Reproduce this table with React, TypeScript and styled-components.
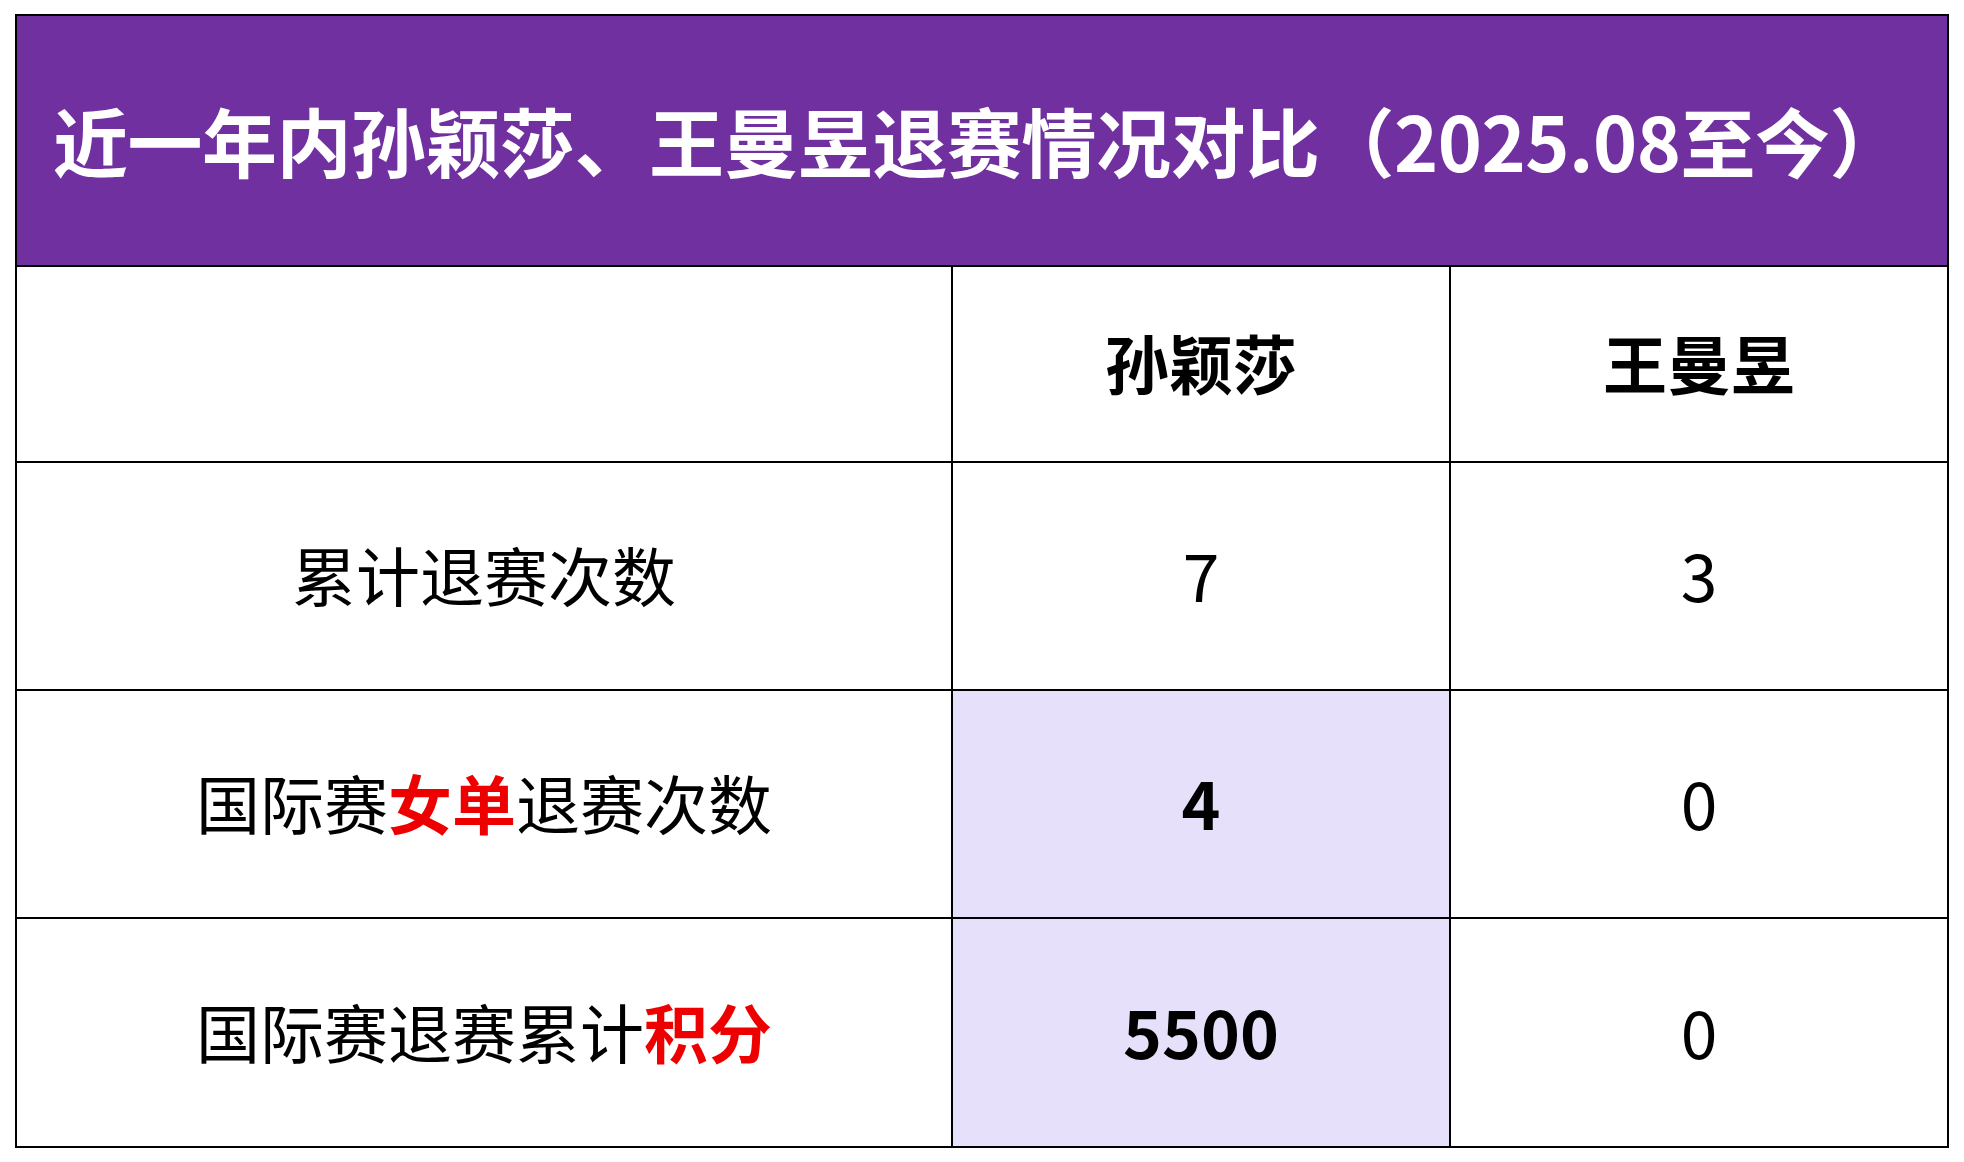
import React from "react";
import styled, { createGlobalStyle } from "styled-components";

const Global = createGlobalStyle`
  html, body {
    margin: 0;
    padding: 0;
    background: #ffffff;
  }
  body {
    font-family: "Noto Sans CJK SC", "Noto Sans", sans-serif;
  }
`;

const Page = styled.div`
  padding: 14px 0 0 15px;
`;

const Table = styled.div`
  width: 1934px;
  box-sizing: border-box;
  border: 2px solid #000;
  display: flex;
  flex-direction: column;
`;

const TitleBar = styled.div`
  height: 251px;
  box-sizing: border-box;
  background: #7030a0;
  border-bottom: 2px solid #000;
  display: flex;
  align-items: center;
  padding: 0 0 2px 36px;
`;

const Title = styled.h1`
  margin: 0;
  color: #ffffff;
  font-family: "Noto Sans CJK SC", sans-serif;
  font-weight: 700;
  font-size: 75px;
  line-height: 1;
  letter-spacing: -0.5px;
`;

const Grid = styled.div`
  display: grid;
  grid-template-columns: 936px 498px 1fr;
  grid-template-rows: 196px 228px 228px 227px;
`;

const Cell = styled.div<{ $last?: boolean; $bottom?: boolean; $tint?: boolean }>`
  box-sizing: border-box;
  display: flex;
  align-items: center;
  justify-content: center;
  border-right: ${(p) => (p.$last ? "none" : "2px solid #000")};
  border-bottom: ${(p) => (p.$bottom ? "none" : "2px solid #000")};
  background: ${(p) => (p.$tint ? "#e6e0fa" : "#ffffff")};
  color: #000;
  font-family: "Noto Sans CJK SC", sans-serif;
  font-size: 64px;
  line-height: 1;
  padding-bottom: 6px;
`;

const Label = styled.span<{ $bold?: boolean }>`
  font-weight: ${(p) => (p.$bold ? 700 : 400)};
`;

const Accent = styled.span`
  color: #ee0000;
  font-weight: 700;
`;

const Num = styled.span<{ $bold?: boolean }>`
  font-family: "Noto Sans CJK SC", "Noto Sans", sans-serif;
  font-weight: ${(p) => (p.$bold ? 700 : 400)};
  font-size: 66px;
`;

type Row = {
  label: React.ReactNode;
  a: string;
  aBold?: boolean;
  aTint?: boolean;
  b: string;
};

const rows: Row[] = [
  { label: <>累计退赛次数</>, a: "7", b: "3" },
  {
    label: (
      <>
        国际赛<Accent>女单</Accent>退赛次数
      </>
    ),
    a: "4",
    aBold: true,
    aTint: true,
    b: "0",
  },
  {
    label: (
      <>
        国际赛退赛累计<Accent>积分</Accent>
      </>
    ),
    a: "5500",
    aBold: true,
    aTint: true,
    b: "0",
  },
];

export default function App() {
  return (
    <>
      <Global />
      <Page>
        <Table>
          <TitleBar>
            <Title>近一年内孙颖莎、王曼昱退赛情况对比（2025.08至今）</Title>
          </TitleBar>
          <Grid>
            <Cell />
            <Cell>
              <Label $bold>孙颖莎</Label>
            </Cell>
            <Cell $last>
              <Label $bold>王曼昱</Label>
            </Cell>
            {rows.map((r, i) => {
              const bottom = i === rows.length - 1;
              return (
                <React.Fragment key={i}>
                  <Cell $bottom={bottom}>
                    <Label>{r.label}</Label>
                  </Cell>
                  <Cell $bottom={bottom} $tint={r.aTint}>
                    <Num $bold={r.aBold}>{r.a}</Num>
                  </Cell>
                  <Cell $bottom={bottom} $last>
                    <Num>{r.b}</Num>
                  </Cell>
                </React.Fragment>
              );
            })}
          </Grid>
        </Table>
      </Page>
    </>
  );
}
